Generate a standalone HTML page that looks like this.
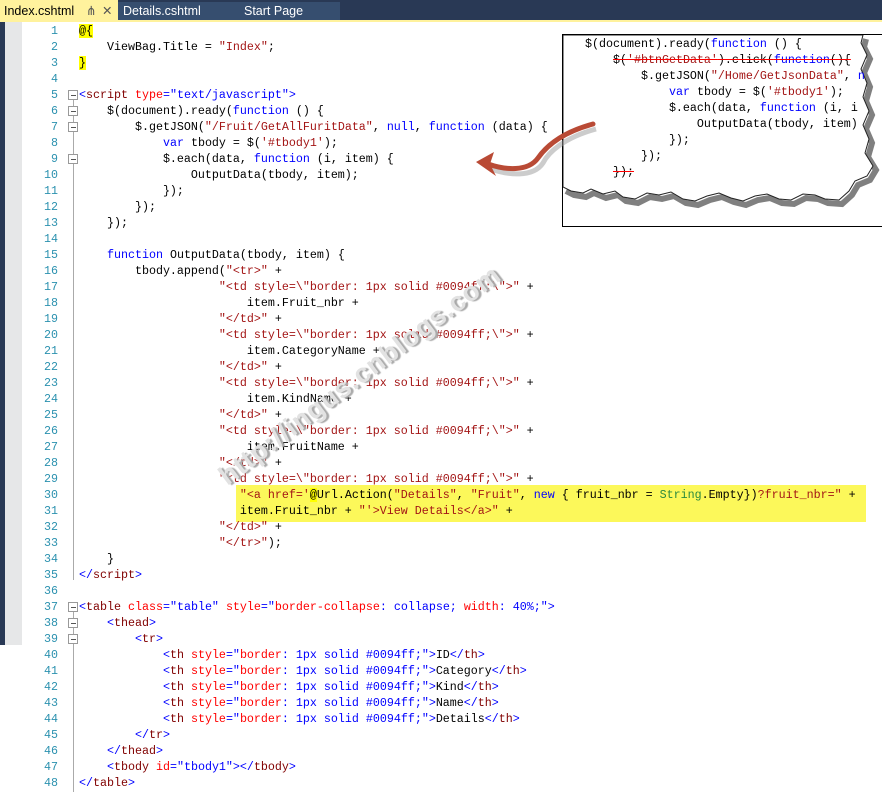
<!DOCTYPE html>
<html><head><meta charset="utf-8"><style>
html,body{margin:0;padding:0;width:882px;height:795px;overflow:hidden;background:#fff;position:relative;font-family:"Liberation Mono",monospace}
.tabbar{position:absolute;left:0;top:0;width:882px;height:20px;background:#293955}
.tabs2{position:absolute;left:118px;top:2px;width:222px;height:18px;background:#364e6f}
.tab{position:absolute;top:0;height:20px;font:12.5px "Liberation Sans",sans-serif;line-height:22px;color:#fff}
.ytab{left:0;width:118px;background:#fff29d;color:#000}
.yline{position:absolute;left:0;top:20px;width:882px;height:2px;background:#fff29d}
.lstrip{position:absolute;left:0;top:22px;width:5px;height:623px;background:#293955}
.gstrip{position:absolute;left:5px;top:22px;width:17px;height:623px;background:#e6e7e8}
pre{margin:0;position:absolute;font-family:"Liberation Mono",monospace;font-size:11.67px;line-height:16px;white-space:pre}
.nums{left:22px;top:23px;width:36px;text-align:right;color:#2b91af}
.code{left:79px;top:23px;color:#000}
.k{color:#0000ff}.s{color:#a31515}.t{color:#800000}.a{color:#ff0000}.v{color:#0000ff}.c{color:#2b91af}
.y{background:#ffff00}
.box{position:absolute;left:68px;width:8px;height:8px;border:1px solid #999;background:#fff}
.box:after{content:"";position:absolute;left:2px;top:4px;width:5px;height:1px;background:#555}
.vl{position:absolute;left:73px;width:1px;background:#aaa}
.hl{position:absolute;left:236px;top:485px;width:630px;height:37px;background:#fcf85a}
.callout{position:absolute;left:562px;top:34px;width:330px;height:191px;border:1px solid #000;background:#fff;overflow:hidden}
.wm{position:absolute;left:130px;top:360px;width:460px;text-align:center;font:bold 27px "Liberation Sans",sans-serif;color:#e2e2e2;transform:rotate(-37deg);letter-spacing:1px;text-shadow:2px 2px 1px #aaa}
</style></head><body>
<div class="tabbar"></div>
<div class="tabs2"></div>
<div class="tab ytab"><span style="padding-left:4px">Index.cshtml</span><span style="position:absolute;left:86px;color:#555">&#8916;</span><span style="position:absolute;left:102px;color:#555">✕</span></div>
<div class="tab" style="left:123px">Details.cshtml</div>
<div class="tab" style="left:244px">Start Page</div>
<div class="yline"></div>
<div class="lstrip"></div><div class="gstrip"></div>
<div class="hl"></div>
<pre class="nums">1
2
3
4
5
6
7
8
9
10
11
12
13
14
15
16
17
18
19
20
21
22
23
24
25
26
27
28
29
30
31
32
33
34
35
36
37
38
39
40
41
42
43
44
45
46
47
48</pre>
<div class="vl" style="top:100px;height:480px"></div>
<div class="vl" style="top:612px;height:180px"></div>
<div class="box" style="top:90px"></div>
<div class="box" style="top:106px"></div>
<div class="box" style="top:122px"></div>
<div class="box" style="top:154px"></div>
<div class="box" style="top:602px"></div>
<div class="box" style="top:618px"></div>
<div class="box" style="top:634px"></div>
<pre class="code"><span class="y">@{</span>
    ViewBag.Title = <span class="s">"Index"</span>;
<span class="y">}</span>

<span class="v">&lt;</span><span class="t">script</span> <span class="a">type</span><span class="v">="text/javascript"&gt;</span>
    $(document).ready(<span class="k">function</span> () {
        $.getJSON(<span class="s">"/Fruit/GetAllFuritData"</span>, <span class="k">null</span>, <span class="k">function</span> (data) {
            <span class="k">var</span> tbody = $(<span class="s">'#tbody1'</span>);
            $.each(data, <span class="k">function</span> (i, item) {
                OutputData(tbody, item);
            });
        });
    });

    <span class="k">function</span> OutputData(tbody, item) {
        tbody.append(<span class="s">"&lt;tr&gt;"</span> +
                    <span class="s">"&lt;td style=\"border: 1px solid #0094ff;\"&gt;"</span> +
                        item.Fruit_nbr +
                    <span class="s">"&lt;/td&gt;"</span> +
                    <span class="s">"&lt;td style=\"border: 1px solid #0094ff;\"&gt;"</span> +
                        item.CategoryName +
                    <span class="s">"&lt;/td&gt;"</span> +
                    <span class="s">"&lt;td style=\"border: 1px solid #0094ff;\"&gt;"</span> +
                        item.KindName +
                    <span class="s">"&lt;/td&gt;"</span> +
                    <span class="s">"&lt;td style=\"border: 1px solid #0094ff;\"&gt;"</span> +
                        item.FruitName +
                    <span class="s">"&lt;/td&gt;"</span> +
                    <span class="s">"&lt;td style=\"border: 1px solid #0094ff;\"&gt;"</span> +
                       <span class="s">"&lt;a href='</span><span class="y">@</span>Url.Action(<span class="s">"Details"</span>, <span class="s">"Fruit"</span>, <span class="k">new</span> { fruit_nbr = <span style="color:#2b8a3e">String</span>.Empty})<span class="s">?fruit_nbr="</span> +
                       item.Fruit_nbr + <span class="s">"'&gt;View Details&lt;/a&gt;"</span> +
                    <span class="s">"&lt;/td&gt;"</span> +
                    <span class="s">"&lt;/tr&gt;"</span>);
    }
<span class="v">&lt;/</span><span class="t">script</span><span class="v">&gt;</span>

<span class="v">&lt;</span><span class="t">table</span> <span class="a">class</span><span class="v">="table"</span> <span class="a">style</span><span class="v">="</span><span class="a">border-collapse</span><span class="v">: collapse; </span><span class="a">width</span><span class="v">: 40%;"&gt;</span>
    <span class="v">&lt;</span><span class="t">thead</span><span class="v">&gt;</span>
        <span class="v">&lt;</span><span class="t">tr</span><span class="v">&gt;</span>
            <span class="v">&lt;</span><span class="t">th</span> <span class="a">style</span><span class="v">="</span><span class="a">border</span><span class="v">: 1px solid #0094ff;"&gt;</span>ID<span class="v">&lt;/</span><span class="t">th</span><span class="v">&gt;</span>
            <span class="v">&lt;</span><span class="t">th</span> <span class="a">style</span><span class="v">="</span><span class="a">border</span><span class="v">: 1px solid #0094ff;"&gt;</span>Category<span class="v">&lt;/</span><span class="t">th</span><span class="v">&gt;</span>
            <span class="v">&lt;</span><span class="t">th</span> <span class="a">style</span><span class="v">="</span><span class="a">border</span><span class="v">: 1px solid #0094ff;"&gt;</span>Kind<span class="v">&lt;/</span><span class="t">th</span><span class="v">&gt;</span>
            <span class="v">&lt;</span><span class="t">th</span> <span class="a">style</span><span class="v">="</span><span class="a">border</span><span class="v">: 1px solid #0094ff;"&gt;</span>Name<span class="v">&lt;/</span><span class="t">th</span><span class="v">&gt;</span>
            <span class="v">&lt;</span><span class="t">th</span> <span class="a">style</span><span class="v">="</span><span class="a">border</span><span class="v">: 1px solid #0094ff;"&gt;</span>Details<span class="v">&lt;/</span><span class="t">th</span><span class="v">&gt;</span>
        <span class="v">&lt;/</span><span class="t">tr</span><span class="v">&gt;</span>
    <span class="v">&lt;/</span><span class="t">thead</span><span class="v">&gt;</span>
    <span class="v">&lt;</span><span class="t">tbody</span> <span class="a">id</span><span class="v">="tbody1"&gt;&lt;/</span><span class="t">tbody</span><span class="v">&gt;</span>
<span class="v">&lt;/</span><span class="t">table</span><span class="v">&gt;</span></pre>
<div class="wm">http://ingus.cnblogs.com</div>
<div class="callout">
<svg width="330" height="191" style="position:absolute;left:0;top:0">
<path d="M0,152 L8,156 L20,158 L28,154 L40,159 L52,156 L60,162 L72,164 L84,158 L96,160 L108,157 L120,164 L132,166 L144,161 L156,158 L168,163 L180,166 L192,161 L204,159 L216,164 L228,165 L240,159 L252,160 L262,164 L276,165 L286,156 L292,146 L304,141 L310,131 L302,118 L306,104 L300,90 L306,76 L300,62 L304,48 L298,34 L304,20 L298,8 L300,0" fill="none" stroke="#555" stroke-width="6" opacity="0.75" transform="translate(3,4)"/>
<path d="M0,152 L8,156 L20,158 L28,154 L40,159 L52,156 L60,162 L72,164 L84,158 L96,160 L108,157 L120,164 L132,166 L144,161 L156,158 L168,163 L180,166 L192,161 L204,159 L216,164 L228,165 L240,159 L252,160 L262,164 L276,165 L286,156 L292,146 L304,141 L310,131 L302,118 L306,104 L300,90 L306,76 L300,62 L304,48 L298,34 L304,20 L298,8 L300,0 L0,0 Z" fill="#fff" stroke="#222" stroke-width="1"/>
</svg>
<pre style="left:22px;top:1px;color:#000">$(document).ready(<span class="k">function</span> () {
    <span style="text-decoration:line-through;text-decoration-color:red">$(<span class="s">'#btnGetData'</span>).click(<span class="k">function</span>(){</span>
        $.getJSON(<span class="s">"/Home/GetJsonData"</span>, <span class="k">n</span>
            <span class="k">var</span> tbody = $(<span class="s">'#tbody1'</span>);
            $.each(data, <span class="k">function</span> (i, i
                OutputData(tbody, item)
            });
        });
    <span style="text-decoration:line-through;text-decoration-color:red">});</span></pre>
</div>
<svg width="882" height="795" style="position:absolute;left:0;top:0;pointer-events:none">
<path d="M593,126 C560,135 545,150 540,160 C530,175 505,172 488,166" fill="none" stroke="#999" stroke-width="5" opacity="0.5" transform="translate(3,3)"/>
<path d="M593,124 C560,133 545,148 538,158 C528,172 505,170 488,164" fill="none" stroke="#b94a35" stroke-width="5" stroke-linecap="round"/>
<path d="M476,162 L494,152 L490,164 L496,176 Z" fill="#b94a35"/>
</svg>
</body></html>
